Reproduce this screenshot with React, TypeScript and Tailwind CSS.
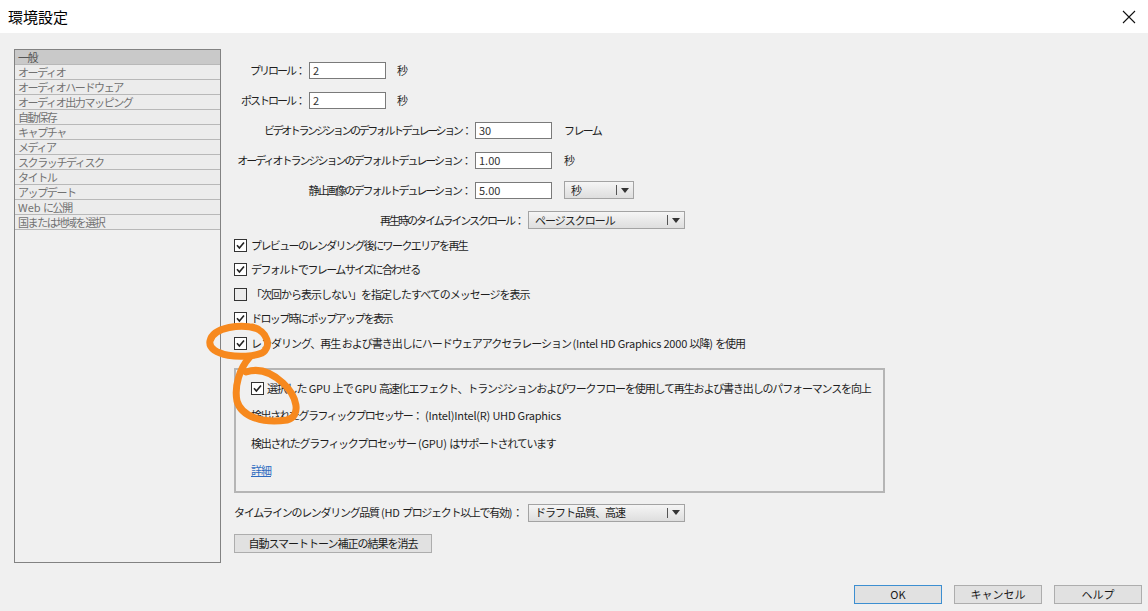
import React from "react";

const font = { fontFamily: '"Noto Sans CJK JP", "Noto Sans", sans-serif' };

const categories: React.ReactNode[] = [
  "一般",
  "オーディオ",
  "オーディオハードウェア",
  "オーディオ出力マッピング",
  "自動保存",
  "キャプチャ",
  "メディア",
  "スクラッチディスク",
  "タイトル",
  "アップデート",
  <span>
    <span className="tracking-normal">Web </span>に公開
  </span>,
  "国または地域を選択",
];

// latin runs keep normal spacing, kana get squeezed like Meiryo UI
function L({ children }: { children: React.ReactNode }) {
  return <span className="tracking-[-0.2px]">{children}</span>;
}

function CheckBox({ checked }: { checked: boolean }) {
  return (
    <svg width="13" height="13" viewBox="0 0 13 13" className="shrink-0">
      <rect x="0.5" y="0.5" width="12" height="12" fill={checked ? "#ffffff" : "#ececec"} stroke="#333333" />
      {checked && <path d="M3 6.2 L5.4 9 L10 3.4" fill="none" stroke="#222222" strokeWidth="1.6" />}
    </svg>
  );
}

function TextBox({ value }: { value: string }) {
  return (
    <div className="flex h-[17px] w-[77px] shrink-0 items-center border border-[#7a7a7a] bg-white pl-[3px] text-[11px] leading-none tracking-normal text-[#333]">
      {value}
    </div>
  );
}

function Select({ value, width }: { value: string; width: string }) {
  return (
    <div className={`flex h-[18px] ${width} shrink-0 items-center border border-[#a3a3a3] bg-gradient-to-b from-[#f5f5f5] to-[#dedede] text-[11px] leading-none text-[#222]`}>
      <span className="flex-1 pl-[6px]">{value}</span>
      <span className="h-[10px] w-px bg-[#555]" />
      <span className="flex w-[16px] justify-center">
        <svg width="8" height="5" viewBox="0 0 8 5">
          <path d="M0 0 H8 L4 5 Z" fill="#333" />
        </svg>
      </span>
    </div>
  );
}

function Button({ label, width, focused }: { label: string; width: string; focused?: boolean }) {
  return (
    <div
      className={`flex h-[19px] ${width} items-center justify-center border ${focused ? "border-[#3d8fd1]" : "border-[#adadad]"} bg-[#e1e1e1] text-[11px] leading-none text-[#1a1a1a]`}
    >
      {label}
    </div>
  );
}

function CheckRow({ checked, tight, children }: { checked: boolean; tight?: boolean; children: React.ReactNode }) {
  return (
    <div className="flex h-[24.5px] items-center gap-[4px]">
      <CheckBox checked={checked} />
      <span className={tight ? "tracking-[-1.6px]" : ""}>{children}</span>
    </div>
  );
}

function Label({ width, tracking = "tracking-[-2px]", children }: { width: string; tracking?: string; children: React.ReactNode }) {
  return (
    <div className={`flex ${width} shrink-0 justify-end ${tracking}`}>
      <span className="shrink-0">{children}</span>
    </div>
  );
}

export default function App() {
  return (
    <div className="relative flex h-[611px] w-[1148px] flex-col overflow-hidden whitespace-nowrap bg-white" style={font}>
      <div className="flex h-[33px] items-center justify-between bg-white pl-[8px] pr-[6px]">
        <span className="text-[15px] leading-none text-black">環境設定</span>
        <svg width="14" height="14" viewBox="0 0 14 14" className="mr-[6px]">
          <path d="M1 1 L13 13 M13 1 L1 13" stroke="#111" strokeWidth="1.1" />
        </svg>
      </div>

      <div className="flex flex-1 flex-col bg-[#f0f0f0]">
        <div className="flex pl-[14px] pt-[16px]">
          <div className="h-[514px] w-[207px] shrink-0 border border-[#828282] bg-[#f0f0f0]">
            {categories.map((c, i) => (
              <div
                key={i}
                className={`flex h-[15px] items-center border-b border-[#b8b8b8] pl-[3px] text-[11px] leading-none tracking-[-1.4px] ${i === 0 ? "bg-[#c9c9c9] text-[#555]" : "bg-[#ececec] text-[#727272]"}`}
              >
                {c}
              </div>
            ))}
          </div>

          <div className="ml-[13px] flex flex-col pt-[6px] text-[11px] leading-none tracking-[-1px] text-[#1e1e1e]">
            <div className="flex h-[30px] items-center">
              <Label width="w-[70px]">プリロール：</Label>
              <div className="ml-[5px]"><TextBox value="2" /></div>
              <span className="ml-[11px]">秒</span>
            </div>
            <div className="flex h-[30px] items-center">
              <Label width="w-[70px]">ポストロール：</Label>
              <div className="ml-[5px]"><TextBox value="2" /></div>
              <span className="ml-[11px]">秒</span>
            </div>
            <div className="flex h-[30px] items-center">
              <Label width="w-[236px]" tracking="tracking-[-2.4px]">ビデオトランジションのデフォルトデュレーション：</Label>
              <div className="ml-[5px]"><TextBox value="30" /></div>
              <span className="ml-[12px] tracking-[-1.6px]">フレーム</span>
            </div>
            <div className="flex h-[30px] items-center">
              <Label width="w-[236px]">オーディオトランジションのデフォルトデュレーション：</Label>
              <div className="ml-[5px]"><TextBox value="1.00" /></div>
              <span className="ml-[12px]">秒</span>
            </div>
            <div className="flex h-[30px] items-center">
              <Label width="w-[236px]">静止画像のデフォルトデュレーション：</Label>
              <div className="ml-[5px]"><TextBox value="5.00" /></div>
              <div className="ml-[12px]"><Select value="秒" width="w-[70px]" /></div>
            </div>
            <div className="flex h-[30px] items-center">
              <Label width="w-[289px]">再生時のタイムラインスクロール：</Label>
              <div className="ml-[5px]"><Select value="ページスクロール" width="w-[157px]" /></div>
            </div>

            <div className="-mt-[2px] flex flex-col">
              <CheckRow checked tight>プレビューのレンダリング後にワークエリアを再生</CheckRow>
              <CheckRow checked tight>デフォルトでフレームサイズに合わせる</CheckRow>
              <CheckRow checked={false}>「次回から表示しない」を指定したすべてのメッセージを表示</CheckRow>
              <CheckRow checked tight>ドロップ時にポップアップを表示</CheckRow>
              <CheckRow checked>
                レンダリング、再生 および書き出しにハードウェアアクセラレーション <L>(Intel HD Graphics 2000 </L>以降<L>) </L>を使用
              </CheckRow>
            </div>

            <div className="mt-[12px] flex h-[125px] w-[651px] flex-col border-2 border-[#b5b5b5] pl-[15px] pt-[12px]">
              <div className="flex h-[14px] items-center gap-[3px]">
                <CheckBox checked />
                <span className="tracking-[-1.15px]">
                  選択した<L> GPU </L>上で<L> GPU </L>高速化エフェクト、トランジションおよびワークフローを使用して再生および書き出しのパフォーマンスを向上
                </span>
              </div>
              <div className="mt-[13px] flex h-[14px] items-center">
                <span className="w-[174px] shrink-0 tracking-[-1.5px]">検出されたグラフィックプロセッサー：</span>
                <L>(Intel)Intel(R) UHD Graphics</L>
              </div>
              <div className="mt-[14px] flex h-[14px] items-center">
                <span className="tracking-[-1.3px]">
                  検出されたグラフィックプロセッサー<L> (GPU) </L>はサポートされています
                </span>
              </div>
              <div className="mt-[13px] flex h-[14px] items-center">
                <span className="text-[#2f6cc0] underline">詳細</span>
              </div>
            </div>

            <div className="mt-[11px] flex h-[18px] items-center">
              <div className="flex w-[294px] shrink-0">
                <span className="shrink-0 tracking-[-1.3px]">
                  タイムラインのレンダリング品質<L> (HD </L>プロジェクト以上で有効<L>)</L>：
                </span>
              </div>
              <Select value="ドラフト品質、高速" width="w-[157px]" />
            </div>
            <div className="mt-[12px]">
              <Button label="自動スマートトーン補正の結果を消去" width="w-[198px]" />
            </div>
          </div>
        </div>

        <div className="mt-[22px] flex justify-end gap-[12px] pr-[6px]">
          <Button label="OK" width="w-[88px]" focused />
          <Button label="キャンセル" width="w-[88px]" />
          <Button label="ヘルプ" width="w-[88px]" />
        </div>
      </div>

      <svg className="pointer-events-none absolute inset-0" width="1148" height="611" viewBox="0 0 1148 611">
        <g fill="none" stroke="#f7891e" strokeWidth="7" strokeLinecap="round" strokeLinejoin="round">
          <path d="M258 329 C 242 323, 213 327, 210 341 C 207 356, 244 360, 262 353 C 272 347, 268 331, 252 327" />
          <path d="M249 358 C 240 368, 234 386, 237 401 C 241 416, 262 424, 287 420 C 302 416, 297 396, 283 383 C 271 372, 258 368, 246 372" />
        </g>
      </svg>
    </div>
  );
}
